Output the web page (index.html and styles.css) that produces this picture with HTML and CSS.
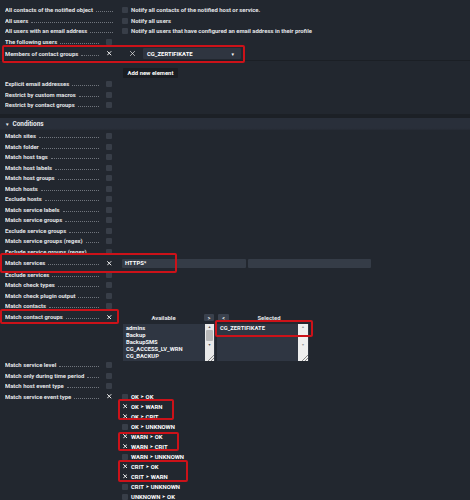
FILE: index.html
```html
<!DOCTYPE html>
<html lang="en">
<head>
<meta charset="utf-8">
<title>Notification rule</title>
<link rel="stylesheet" href="styles.css">
</head>
<body>
<div class="page">

  <!-- Contact selection -->
  <section class="block">
    <div class="row row-wide">
      <span class="label">All contacts of the notified object</span>
      <span class="value"><span class="box"></span>Notify all contacts of the notified host or service.</span>
    </div>
    <div class="row row-wide">
      <span class="label">All users</span>
      <span class="value"><span class="box"></span>Notify all users</span>
    </div>
    <div class="row row-wide">
      <span class="label">All users with an email address</span>
      <span class="value"><span class="box"></span>Notify all users that have configured an email address in their profile</span>
    </div>
    <div class="row">
      <span class="label">The following users</span>
      <span class="check"><span class="box"></span></span>
      <span class="value"></span>
    </div>
    <div class="row row-members">
      <span class="label">Members of contact groups</span>
      <span class="check"><svg class="x" viewBox="0 0 5 5"><path d="M0.6 0.6L4.4 4.4M4.4 0.6L0.6 4.4"/></svg></span>
      <span class="value">
        <svg class="x-del" viewBox="0 0 6 6"><path d="M0.5 0.5L5.5 5.5M5.5 0.5L0.5 5.5"/></svg>
        <span class="select">CG_ZERTIFIKATE<span class="caret">▾</span></span>
      </span>
    </div>
    <div class="add-line"><button class="btn-add" type="button">Add new element</button></div>
    <div class="row">
      <span class="label">Explicit email addresses</span>
      <span class="check"><span class="box"></span></span>
      <span class="value"></span>
    </div>
    <div class="row">
      <span class="label">Restrict by custom macros</span>
      <span class="check"><span class="box"></span></span>
      <span class="value"></span>
    </div>
    <div class="row">
      <span class="label">Restrict by contact groups</span>
      <span class="check"><span class="box"></span></span>
      <span class="value"></span>
    </div>
  </section>

  <div class="divider"></div>

  <!-- Conditions -->
  <section class="block">
    <div class="section-head"><span class="tri">▼</span>Conditions</div>
    <div class="rows">
      <div class="row"><span class="label">Match sites</span><span class="check"><span class="box"></span></span><span class="value"></span></div>
      <div class="row"><span class="label">Match folder</span><span class="check"><span class="box"></span></span><span class="value"></span></div>
      <div class="row"><span class="label">Match host tags</span><span class="check"><span class="box"></span></span><span class="value"></span></div>
      <div class="row"><span class="label">Match host labels</span><span class="check"><span class="box"></span></span><span class="value"></span></div>
      <div class="row"><span class="label">Match host groups</span><span class="check"><span class="box"></span></span><span class="value"></span></div>
      <div class="row"><span class="label">Match hosts</span><span class="check"><span class="box"></span></span><span class="value"></span></div>
      <div class="row"><span class="label">Exclude hosts</span><span class="check"><span class="box"></span></span><span class="value"></span></div>
      <div class="row"><span class="label">Match service labels</span><span class="check"><span class="box"></span></span><span class="value"></span></div>
      <div class="row"><span class="label">Match service groups</span><span class="check"><span class="box"></span></span><span class="value"></span></div>
      <div class="row"><span class="label">Exclude service groups</span><span class="check"><span class="box"></span></span><span class="value"></span></div>
      <div class="row"><span class="label">Match service groups (regex)</span><span class="check"><span class="box"></span></span><span class="value"></span></div>
      <div class="row"><span class="label">Exclude service groups (regex)</span><span class="check"><span class="box"></span></span><span class="value"></span></div>
      <div class="row row-services">
        <span class="label">Match services</span>
        <span class="check"><svg class="x" viewBox="0 0 5 5"><path d="M0.6 0.6L4.4 4.4M4.4 0.6L0.6 4.4"/></svg></span>
        <span class="value inputs">
          <span class="text-input">HTTPS*</span>
          <span class="text-input"></span>
        </span>
      </div>
      <div class="row"><span class="label">Exclude services</span><span class="check"><span class="box"></span></span><span class="value"></span></div>
      <div class="row"><span class="label">Match check types</span><span class="check"><span class="box"></span></span><span class="value"></span></div>
      <div class="row"><span class="label">Match check plugin output</span><span class="check"><span class="box"></span></span><span class="value"></span></div>
      <div class="row"><span class="label">Match contacts</span><span class="check"><span class="box"></span></span><span class="value"></span></div>
      <div class="row row-groups">
        <span class="label">Match contact groups</span>
        <span class="check"><svg class="x" viewBox="0 0 5 5"><path d="M0.6 0.6L4.4 4.4M4.4 0.6L0.6 4.4"/></svg></span>
        <span class="value duallist">
          <span class="dl-col">
            <span class="dl-head"><span class="dl-title">Available</span><span class="dl-btn">&gt;</span></span>
            <span class="listbox">
              <span class="items">
                <span>admins</span>
                <span>Backup</span>
                <span>BackupSMS</span>
                <span>CG_ACCESS_LV_WRN</span>
                <span>CG_BACKUP</span>
              </span>
              <span class="sbar">
                <span class="arr">▲</span>
                <span class="thumb"></span>
                <span class="arr">▼</span>
                <span class="grip"></span>
              </span>
            </span>
          </span>
          <span class="dl-col">
            <span class="dl-head"><span class="dl-btn">&lt;</span><span class="dl-title">Selected</span></span>
            <span class="listbox">
              <span class="items">
                <span>CG_ZERTIFIKATE</span>
              </span>
              <span class="sbar off">
                <span class="arr">▲</span>
                <span class="gap"></span>
                <span class="arr">▼</span>
                <span class="grip"></span>
              </span>
            </span>
          </span>
        </span>
      </div>
      <div class="row"><span class="label">Match service level</span><span class="check"><span class="box"></span></span><span class="value"></span></div>
      <div class="row"><span class="label">Match only during time period</span><span class="check"><span class="box"></span></span><span class="value"></span></div>
      <div class="row"><span class="label">Match host event type</span><span class="check"><span class="box"></span></span><span class="value"></span></div>
      <div class="row row-events">
        <span class="label">Match service event type</span>
        <span class="check"><svg class="x" viewBox="0 0 5 5"><path d="M0.6 0.6L4.4 4.4M4.4 0.6L0.6 4.4"/></svg></span>
        <span class="value events">
          <span class="ev"><span class="box"></span>OK <i>➤</i> OK</span>
          <span class="ev"><svg class="x" viewBox="0 0 5 5"><path d="M0.6 0.6L4.4 4.4M4.4 0.6L0.6 4.4"/></svg>OK <i>➤</i> WARN</span>
          <span class="ev"><svg class="x" viewBox="0 0 5 5"><path d="M0.6 0.6L4.4 4.4M4.4 0.6L0.6 4.4"/></svg>OK <i>➤</i> CRIT</span>
          <span class="ev"><span class="box"></span>OK <i>➤</i> UNKNOWN</span>
          <span class="ev"><svg class="x" viewBox="0 0 5 5"><path d="M0.6 0.6L4.4 4.4M4.4 0.6L0.6 4.4"/></svg>WARN <i>➤</i> OK</span>
          <span class="ev"><svg class="x" viewBox="0 0 5 5"><path d="M0.6 0.6L4.4 4.4M4.4 0.6L0.6 4.4"/></svg>WARN <i>➤</i> CRIT</span>
          <span class="ev"><span class="box"></span>WARN <i>➤</i> UNKNOWN</span>
          <span class="ev"><svg class="x" viewBox="0 0 5 5"><path d="M0.6 0.6L4.4 4.4M4.4 0.6L0.6 4.4"/></svg>CRIT <i>➤</i> OK</span>
          <span class="ev"><svg class="x" viewBox="0 0 5 5"><path d="M0.6 0.6L4.4 4.4M4.4 0.6L0.6 4.4"/></svg>CRIT <i>➤</i> WARN</span>
          <span class="ev"><span class="box"></span>CRIT <i>➤</i> UNKNOWN</span>
          <span class="ev"><span class="box"></span>UNKNOWN <i>➤</i> OK</span>
        </span>
      </div>
    </div>
  </section>

  <!-- highlight frames drawn over the form -->
  <div class="hl hl-members"></div>
  <div class="hl hl-services"></div>
  <div class="hl hl-groups"></div>
  <div class="hl hl-selected"></div>
  <div class="hl hl-ev1"></div>
  <div class="hl hl-ev2"></div>
  <div class="hl hl-ev3"></div>
</div>
</body>
</html>
```

FILE: styles.css
```css
* { box-sizing: border-box; }

html, body {
  margin: 0;
  height: 100%;
  background: #22272f;
}

body {
  font-family: Roboto, "Liberation Sans", "DejaVu Sans", sans-serif;
  font-size: 5.9px;
  font-weight: 700;
  color: #e3e5e8;
  overflow: hidden;
}

.page {
  position: relative;
  padding-top: 5px;
}

/* form rows: label with dotted leader | checkbox | value */
.row {
  display: grid;
  grid-template-columns: 96px 20px 1fr;
  height: 10.5px;
  align-items: center;
  padding-left: 5px;
}

.label {
  display: flex;
  align-items: baseline;
  white-space: nowrap;
  overflow: hidden;
}

.label::after {
  content: "";
  flex: 1;
  min-width: 4px;
  margin: 0 2px 0 3px;
  border-bottom: 1px dotted #70757d;
}

/* rows without a checkbox: the leader runs on into the checkbox column */
.row-wide .label { grid-column: 1 / span 2; }
.row-wide .label::after { margin-right: 8px; }

.check {
  display: flex;
  align-items: center;
}

.check .box { margin-left: 5px; }
.check .x { margin-left: 6px; }

.value {
  display: flex;
  align-items: center;
  white-space: nowrap;
}

.value > .box {
  margin: 0 3px 0 1px;
}

.box {
  display: inline-block;
  width: 6px;
  height: 6px;
  background: #383e48;
  border-radius: 1px;
  flex: none;
}

.x {
  width: 4.5px;
  height: 4.5px;
  flex: none;
}

.x path, .x-del path {
  stroke: #f2f2f2;
  stroke-width: 1.1;
  fill: none;
  stroke-linecap: round;
}

/* contact group list entry */
.row-members {
  height: 13px;
  margin-top: 0.5px;
  border-bottom: 1px solid #1b1f25;
}

.x-del {
  width: 5px;
  height: 5px;
  margin-left: 9px;
  flex: none;
}

.x-del path { stroke-width: 0.8; }

.select {
  display: flex;
  align-items: center;
  justify-content: space-between;
  margin-left: 8px;
  width: 98px;
  height: 11px;
  padding: 0 7px 0 4px;
  background: #2f3540;
  border-radius: 1px;
  color: #ffffff;
}

.caret { font-size: 5px; }

.add-line {
  padding: 7px 0 1.5px 123px;
}

.btn-add {
  display: block;
  height: 10px;
  width: 55px;
  padding: 0;
  border: 0;
  border-radius: 1px;
  background: #1a1d22;
  color: #ffffff;
  font: inherit;
}

/* section separation */
.divider {
  height: 4px;
  margin-top: 3.75px;
  background: #1c2026;
}

.section-head {
  display: flex;
  align-items: center;
  height: 12px;
  padding-left: 5px;
  background: linear-gradient(#292f3a 0, #292f3a 85%, #252a33 100%);
  color: #e8eaed;
  font-size: 6.4px;
}

.tri {
  font-size: 4.6px;
  margin-right: 3px;
}

.rows { padding-top: 0.75px; }

/* service pattern inputs */
.row-services { height: 12.5px; }

.inputs { gap: 2px; }

.text-input {
  display: flex;
  align-items: center;
  height: 9px;
  padding-left: 3px;
  background: #353c47;
  border-radius: 1px;
  color: #ffffff;
}

.text-input:first-child { width: 124px; margin-left: 1px; }
.text-input:last-child { width: 123px; }

/* dual list choice */
.row-groups {
  height: 48.25px;
  align-items: start;
}

.row-groups .label,
.row-groups .check {
  height: 10.5px;
  align-items: center;
}

.row-groups .label { align-items: baseline; padding-top: 2.3px; }

.duallist {
  align-items: flex-start;
  gap: 2px;
  padding-top: 2.5px;
  margin-left: 2px;
}

.dl-col {
  display: flex;
  flex-direction: column;
  width: 92px;
}

.dl-head {
  display: flex;
  align-items: center;
  height: 7px;
  margin-bottom: 2.5px;
}

.dl-title {
  flex: 1;
  text-align: center;
}

.dl-btn {
  display: flex;
  align-items: center;
  justify-content: center;
  width: 10px;
  height: 7px;
  background: #3a414d;
  border-radius: 1px;
  color: #fff;
  font-size: 5px;
  margin-right: 1px;
}

.dl-col + .dl-col .dl-btn { margin: 0 0 0 1px; width: 11px; }

.listbox {
  display: flex;
  height: 37px;
  background: #2f3642;
}

.items {
  flex: 1;
  display: flex;
  flex-direction: column;
  padding: 1.5px 0 0 3px;
  line-height: 7px;
  font-size: 5.8px;
  color: #f4f5f7;
}

.sbar {
  position: relative;
  display: flex;
  flex-direction: column;
  align-items: center;
  width: 9px;
  margin-right: 1px;
  background: #e9e9e9;
  color: #555;
  font-size: 3.5px;
  line-height: 6px;
}

.sbar .thumb {
  width: 7px;
  height: 11px;
  background: #b8b8b8;
  border-radius: 1px;
  margin: 0.5px 0;
}

.sbar.off { background: #efefef; color: #9a9a9a; width: 10px; }
.sbar .gap { height: 12.5px; }

.sbar .grip {
  position: absolute;
  right: 0;
  bottom: 0;
  width: 6px;
  height: 6px;
  background: linear-gradient(135deg, transparent 45%, #888 45%, #888 55%, transparent 55%, transparent 70%, #888 70%, #888 80%, transparent 80%);
}

/* service event types */
.row-events {
  height: auto;
  align-items: start;
}

.row-events .label,
.row-events .check {
  height: 10.5px;
  align-items: center;
}

.row-events .label { align-items: baseline; padding-top: 2.3px; }

.events {
  flex-direction: column;
  align-items: flex-start;
  padding-top: 0.25px;
}

.ev {
  display: flex;
  align-items: center;
  height: 10px;
  color: #ffffff;
}

.ev .box { margin: 0 3px 0 1px; }
.ev .x { margin: 0 4px 0 1.5px; }

.ev i {
  font-style: normal;
  font-family: "DejaVu Sans", sans-serif;
  font-size: 4.5px;
  margin: 0 1.5px;
}

/* red highlight frames */
.hl {
  position: absolute;
  border: 2px solid #cc1219;
  border-radius: 2px;
  pointer-events: none;
}

.hl-members  { left: 2px;   top: 45px;  width: 243px; height: 18px; }
.hl-services { left: 0;     top: 253px; width: 177px; height: 20px; }
.hl-groups   { left: 0;     top: 309px; width: 119px; height: 14.5px; }
.hl-selected { left: 215px; top: 320px; width: 98px;  height: 16.5px; }
.hl-ev1      { left: 118px; top: 399px; width: 56px;  height: 20.5px; }
.hl-ev2      { left: 118px; top: 431.5px; width: 61px; height: 19.5px; }
.hl-ev3      { left: 118px; top: 460px; width: 70px;  height: 21.5px; }
```
